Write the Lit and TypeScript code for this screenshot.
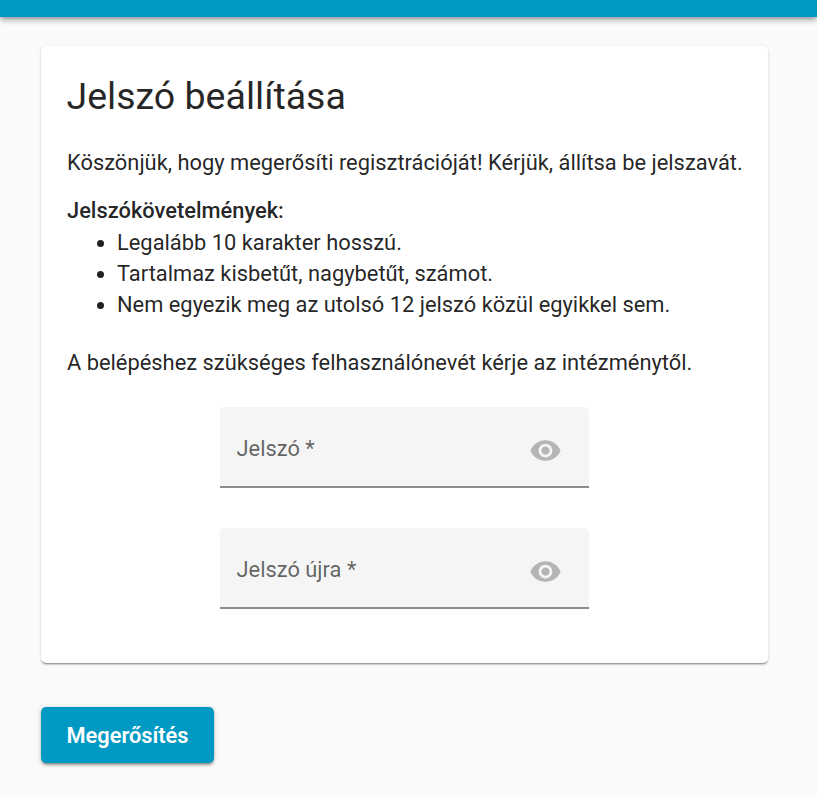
import { LitElement, html, css, svg } from "lit";
import { customElement } from "lit/decorators.js";

const eye = svg`<path d="M12 4.5C7 4.5 2.73 7.61 1 12c1.73 4.39 6 7.5 11 7.5s9.27-3.11 11-7.5c-1.73-4.39-6-7.5-11-7.5zM12 17c-2.76 0-5-2.24-5-5s2.24-5 5-5 5 2.24 5 5-2.24 5-5 5zm0-8c-1.66 0-3 1.34-3 3s1.34 3 3 3 3-1.34 3-3-1.34-3-3-3z"/>`;

@customElement("app-root")
export class AppRoot extends LitElement {
  static styles = css`
    :host { display: block; min-height: 797px; background: #fafafa; font-family: Roboto, sans-serif; color: rgba(0,0,0,.87); overflow: hidden; }
    .bar { height: 17px; background: #0099c3; box-shadow: 0 2px 4px -1px rgba(0,0,0,.25), 0 4px 5px 0 rgba(0,0,0,.16), 0 1px 10px 0 rgba(0,0,0,.14); }
    .main { padding: 29px 49px 0 41px; }
    .card { background: #fff; border-radius: 5px; padding: 25px 25px 25px 26px; height: 617px; box-sizing: border-box; box-shadow: 0 2px 2px -1px rgba(0,0,0,.42), 0 1px 3px 0 rgba(0,0,0,.14); }
    h1 { margin: 0 0 26px -0.5px; font-size: 37.5px; font-weight: 400; line-height: 50px; }
    p { margin: 0; font-size: 21.87px; line-height: 31px; }
    .req { margin-top: 17px; }
    b { font-weight: 500; display: block; margin-bottom: 1px; }
    ul { margin: 0 0 27px; padding-left: 50px; font-size: 21.87px; line-height: 31px; }
    .fields { display: flex; flex-direction: column; align-items: center; gap: 40px; margin-top: 29px; }
    .field { width: 369px; height: 81px; box-sizing: border-box; background: #f5f5f5; border-radius: 5px 5px 0 0; border-bottom: 2px solid #8c8c8c; padding: 6px 27px 0 17px; display: flex; align-items: center; justify-content: space-between; position: relative; left: -1px; }
    .label { font-size: 21.87px; color: rgba(0,0,0,.6); margin-top: -2px; }
    .field svg { width: 33px; height: 33px; fill: rgba(0,0,0,.26); display: block; margin-top: 1px; }
    .btn { margin-top: 44px; width: 173px; height: 56px; border: none; border-radius: 5px; background: #0099c3; color: #fff; font: 600 21.8px Roboto, sans-serif; display: block; padding: 0; box-shadow: 0 3px 3px -2px rgba(0,0,0,.35), 0 2px 3px 0 rgba(0,0,0,.18), 0 1px 6px 0 rgba(0,0,0,.14); }
  `;

  render() {
    return html`
      <div class="bar"></div>
      <div class="main">
        <div class="card">
          <h1>Jelszó beállítása</h1>
          <p>Köszönjük, hogy megerősíti regisztrációját! Kérjük, állítsa be jelszavát.</p>
          <div class="req">
            <p><b>Jelszókövetelmények:</b></p>
            <ul>
              <li>Legalább 10 karakter hosszú.</li>
              <li>Tartalmaz kisbetűt, nagybetűt, számot.</li>
              <li>Nem egyezik meg az utolsó 12 jelszó közül egyikkel sem.</li>
            </ul>
          </div>
          <p>A belépéshez szükséges felhasználónevét kérje az intézménytől.</p>
          <div class="fields">
            <div class="field"><span class="label">Jelszó *</span><svg viewBox="0 0 24 24">${eye}</svg></div>
            <div class="field"><span class="label">Jelszó újra *</span><svg viewBox="0 0 24 24">${eye}</svg></div>
          </div>
        </div>
        <button class="btn">Megerősítés</button>
      </div>
    `;
  }
}
